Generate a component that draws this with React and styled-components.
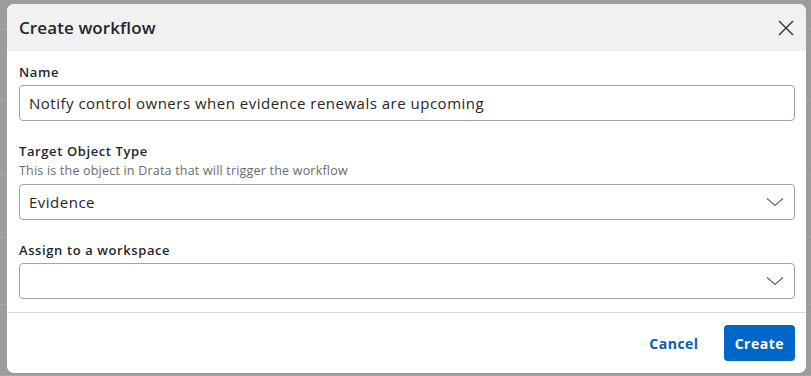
import React from "react";
import styled, { createGlobalStyle } from "styled-components";

const Global = createGlobalStyle`
  html, body { margin: 0; padding: 0; }
  body {
    width: 811px;
    height: 376px;
    overflow: hidden;
    background: #9c9c9f;
    font-family: "Open Sans", "Noto Sans", sans-serif;
  }
`;

const Page = styled.div`
  position: relative;
  width: 811px;
  height: 376px;
  background: #9c9c9f;
  overflow: hidden;
`;

const BgTable = styled.div`
  display: grid;
  grid-template-rows: 30px 70px 75px 63px 67px 71px;
  width: 100%;
`;

const BgRow = styled.div`
  border-bottom: 1px solid #a7a7aa;
  display: flex;
  align-items: center;
  font-family: "Open Sans", sans-serif;
  font-size: 15px;
  color: #3a3a3c;
`;

const BgHead = styled.div`
  display: flex;
  height: 4px;
  margin-top: -4px;
`;

const BgHeadCell = styled.div`
  width: ${(p) => p.$w}px;
  margin-left: ${(p) => p.$ml || 0}px;
  background: ${(p) => p.$bg || "transparent"};
`;

const Overlay = styled.div`
  position: absolute;
  inset: 0;
  display: flex;
  padding: 4px 5px 3px 7px;
`;

const Modal = styled.div`
  flex: 1;
  display: flex;
  flex-direction: column;
  background: #ffffff;
  border-radius: 7px;
  overflow: hidden;
`;

const Header = styled.div`
  height: 47px;
  flex: none;
  display: flex;
  align-items: center;
  justify-content: space-between;
  padding: 0 12px 0 12px;
  background: #f1f1f1;
`;

const Title = styled.h2`
  margin: 0;
  font-size: 17px;
  font-weight: 600;
  color: #25262b;
  letter-spacing: 0.1px;
`;

const CloseButton = styled.button`
  border: 0;
  background: none;
  padding: 0;
  width: 16px;
  height: 16px;
  display: flex;
  color: #222;
`;

const Body = styled.div`
  flex: 1;
  display: flex;
  flex-direction: column;
  gap: 21px;
  padding: 12px 11px 12px 12px;
  border-bottom: 1px solid #dcdcdc;
`;

const Field = styled.div`
  display: flex;
  flex-direction: column;
`;

const Label = styled.label`
  font-size: 13px;
  line-height: 18px;
  font-weight: 600;
  letter-spacing: 0.6px;
  color: #25262b;
`;

const Help = styled.div`
  margin-top: 3px;
  font-size: 12.5px;
  line-height: 16px;
  letter-spacing: 0.2px;
  color: #6b6c70;
`;

const Control = styled.div`
  margin-top: ${(p) => (p.$afterHelp ? 5 : 4)}px;
  height: 36px;
  box-sizing: border-box;
  border: 1px solid #a3a3a6;
  border-radius: 4px;
  display: flex;
  align-items: center;
  justify-content: space-between;
  padding: 0 10px 0 9px;
  font-size: 15px;
  letter-spacing: 0.5px;
  color: #25262b;
`;

const Chevron = styled.svg`
  width: 18px;
  height: 10px;
  flex: none;
`;

const Footer = styled.div`
  height: 60px;
  flex: none;
  display: flex;
  align-items: center;
  justify-content: flex-end;
  gap: 13px;
  padding: 0 11px;
`;

const Button = styled.button`
  height: 36px;
  border: 0;
  border-radius: 4px;
  padding: 0 ${(p) => (p.$primary ? 11 : 12)}px;
  font-family: "Open Sans", sans-serif;
  font-size: 14px;
  font-weight: 700;
  letter-spacing: 0.5px;
  background: ${(p) => (p.$primary ? "#0067c8" : "transparent")};
  color: ${(p) => (p.$primary ? "#ffffff" : "#0b5cae")};
`;

const ChevronIcon = () => (
  <Chevron viewBox="0 0 18 10">
    <path d="M1 1.5 L9 8.5 L17 1.5" fill="none" stroke="#5f6064" strokeWidth="1.1" />
  </Chevron>
);

export default function App() {
  return (
    <>
      <Global />
      <Page>
        <BgTable>
          <BgRow>
            <BgHead>
              <BgHeadCell $w={1} $ml={178} $bg="#8e8e91" />
              <BgHeadCell $w={1} $ml={29} $bg="#8e8e91" />
              <BgHeadCell $w={62} $ml={86} $bg="#a99f95" />
            </BgHead>
          </BgRow>
          <BgRow />
          <BgRow />
          <BgRow />
          <BgRow />
          <BgRow />
        </BgTable>
        <Overlay>
          <Modal role="dialog" aria-label="Create workflow">
            <Header>
              <Title>Create workflow</Title>
              <CloseButton aria-label="Close">
                <svg viewBox="0 0 16 16" width="16" height="16">
                  <path d="M1 1 L15 15 M15 1 L1 15" stroke="#2a2a2e" strokeWidth="1.3" fill="none" />
                </svg>
              </CloseButton>
            </Header>
            <Body>
              <Field>
                <Label>Name</Label>
                <Control>Notify control owners when evidence renewals are upcoming</Control>
              </Field>
              <Field>
                <Label>Target Object Type</Label>
                <Help>This is the object in Drata that will trigger the workflow</Help>
                <Control $afterHelp>
                  <span>Evidence</span>
                  <ChevronIcon />
                </Control>
              </Field>
              <Field>
                <Label>Assign to a workspace</Label>
                <Control>
                  <span />
                  <ChevronIcon />
                </Control>
              </Field>
            </Body>
            <Footer>
              <Button>Cancel</Button>
              <Button $primary>Create</Button>
            </Footer>
          </Modal>
        </Overlay>
      </Page>
    </>
  );
}
